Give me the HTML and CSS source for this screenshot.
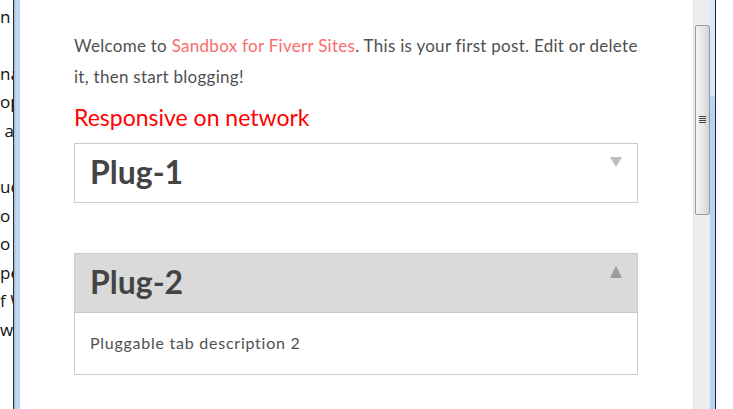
FILE: index.html
```html
<!DOCTYPE html>
<html>
<head>
<meta charset="utf-8">
<link rel="stylesheet" href="styles.css">
</head>
<body>
<div class="screen">
  <div class="behind">
    <div class="behind-line">n <span class="paren">(</span></div>
    <div class="behind-line gap">na</div>
    <div class="behind-line">op</div>
    <div class="behind-line">&nbsp;a</div>
    <div class="behind-line gap">uc</div>
    <div class="behind-line">o</div>
    <div class="behind-line">o</div>
    <div class="behind-line">pe</div>
    <div class="behind-line">f W</div>
    <div class="behind-line">wi</div>
  </div>
  <div class="frame frame-left"></div>
  <div class="modal">
    <div class="content">
      <p class="intro">Welcome to <a class="link" href="#">Sandbox for Fiverr Sites</a>. This is your first post. Edit or delete it, then start blogging!</p>
      <h2 class="net-title">Responsive on network</h2>
      <div class="tab">
        <div class="tab-head">
          <span class="tab-title">Plug-1</span>
          <span class="arrow arrow-down"></span>
        </div>
      </div>
      <div class="tab tab-open">
        <div class="tab-head">
          <span class="tab-title">Plug-2</span>
          <span class="arrow arrow-up"></span>
        </div>
        <div class="tab-body">Pluggable tab description 2</div>
      </div>
    </div>
    <div class="scrollbar">
      <div class="thumb"><span class="grip"></span></div>
    </div>
  </div>
  <div class="frame frame-right"></div>
  <div class="outside"></div>
</div>
</body>
</html>
```

FILE: styles.css
```css
html, body {
  margin: 0;
  padding: 0;
  background: #fff;
  width: 733px;
  height: 409px;
  overflow: hidden;
}

.screen {
  display: flex;
  height: 409px;
}

.behind {
  width: 13px;
  overflow: hidden;
  padding-top: 3px;
  font-family: "Open Sans", "DejaVu Sans", sans-serif;
  font-size: 17px;
  color: #111;
  display: flex;
  flex-direction: column;
  align-items: flex-start;
}

.behind-line {
  height: 28.5px;
  line-height: 28px;
  white-space: nowrap;
}

.behind-line.gap {
  margin-top: 28px;
}

.paren {
  color: #c98a3a;
}

.frame {
  flex: none;
  height: 409px;
}

.frame-left {
  width: 6px;
  border-left: 1px solid #2c2c2c;
  background: linear-gradient(to right, #9fb7d2 0, #c7dcf2 40%, #b8d2ee 100%);
}

.frame-right {
  width: 5px;
  border-right: 1px solid #1e2a36;
  background: linear-gradient(to bottom, #d9e9fb 0, #d9e9fb 96px, #b6d3f2 97px, #b6d3f2 100%);
}

.outside {
  flex: 1;
  background: #fff;
}

.modal {
  width: 690px;
  display: flex;
  background: #fff;
}

.content {
  flex: 1;
  padding: 30px 35px 0 54px;
  font-family: Lato, "Open Sans", sans-serif;
}

.intro {
  margin: 0;
  font-size: 17px;
  letter-spacing: 0.28px;
  line-height: 31px;
  color: #505050;
  width: 572px;
}

.link {
  color: #fb6b6b;
  text-decoration: none;
}

.net-title {
  margin: 10px 0 0;
  font-family: Lato, sans-serif;
  font-weight: 400;
  font-size: 23px;
  line-height: 30px;
  color: #ff0000;
}

.tab {
  width: 562px;
  border: 1px solid #cccccc;
  margin-top: 11px;
}

.tab-open {
  margin-top: 50px;
}

.tab-head {
  height: 58px;
  display: flex;
  justify-content: space-between;
  align-items: flex-start;
  padding: 0 15px 0 15px;
}

.tab-open .tab-head {
  background: #dadada;
  border-bottom: 1px solid #c8c8c8;
}

.tab-title {
  font-size: 32px;
  font-weight: 700;
  color: #444;
  line-height: 56px;
}

.arrow {
  width: 0;
  height: 0;
  margin-top: 13px;
  border-left: 6px solid transparent;
  border-right: 6px solid transparent;
}

.arrow-down {
  border-top: 10px solid #bdbdbd;
}

.arrow-up {
  margin-top: 12px;
  border-bottom: 12px solid #9c9c9c;
}

.tab-body {
  height: 61px;
  padding: 0 15px;
  font-size: 16px;
  letter-spacing: 0.75px;
  line-height: 60px;
  color: #505050;
}

.scrollbar {
  width: 16px;
  flex: none;
  background: #ededed;
  border-left: 1px solid #e2e2e2;
  padding-top: 25px;
  display: flex;
  flex-direction: column;
  align-items: center;
}

.thumb {
  width: 13px;
  height: 188px;
  border: 1px solid #9a9a9a;
  border-radius: 2px;
  background: linear-gradient(to right, #f4f4f4 0, #e9e9e9 45%, #d3d3d3 100%);
  display: flex;
  align-items: center;
  justify-content: center;
}

.grip {
  width: 7px;
  height: 7px;
  background: repeating-linear-gradient(to bottom, #444 0, #444 1px, transparent 1px, transparent 2px);
  margin-top: -2px;
}
```
